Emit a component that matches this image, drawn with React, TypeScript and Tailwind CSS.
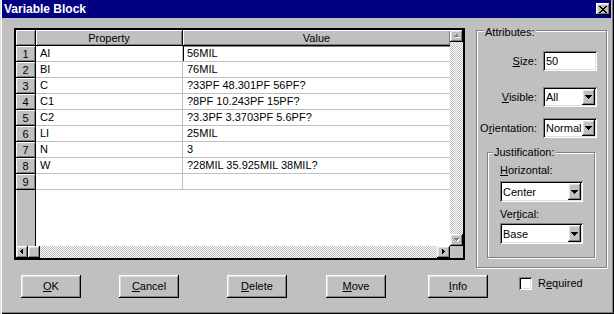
import React from "react";

// Win95-style bevels
const raised =
  "shadow-[inset_-1px_-1px_#000,inset_1px_1px_#fff,inset_-2px_-2px_#808080,inset_2px_2px_#dfdfdf]";
const sunken =
  "shadow-[inset_1px_1px_#808080,inset_-1px_-1px_#fff,inset_2px_2px_#000,inset_-2px_-2px_#dfdfdf]";
const checker =
  "bg-[image:repeating-conic-gradient(#fff_0_25%,#c0c0c0_0_50%)] bg-[length:2px_2px]";

const rows: [string, string][] = [
  ["AI", "56MIL"],
  ["BI", "76MIL"],
  ["C", "?33PF 48.301PF 56PF?"],
  ["C1", "?8PF 10.243PF 15PF?"],
  ["C2", "?3.3PF 3.3703PF 5.6PF?"],
  ["LI", "25MIL"],
  ["N", "3"],
  ["W", "?28MIL 35.925MIL 38MIL?"],
  ["", ""],
];

function DropArrow() {
  return (
    <svg width="7" height="4" viewBox="0 0 7 4" shapeRendering="crispEdges">
      <path d="M0 0h7v1H6v1H5v1H4v1H3V3H2V2H1V1H0z" fill="#000" />
    </svg>
  );
}

function ScrollArrow({ dir, disabled }: { dir: "up" | "down" | "left" | "right"; disabled?: boolean }) {
  const paths = {
    up: "M2 0h1v1h1v1h1v1H0V2h1V1h1z",
    down: "M0 0h5v1H4v1H3v1H2V2H1V1H0z",
    left: "M2 0h1v5H2V4H1V3H0V2h1V1h1z",
    right: "M0 0h1v1h1v1h1v1H2v1H1v1H0z",
  };
  const vertical = dir === "up" || dir === "down";
  const w = vertical ? 5 : 3;
  const h = vertical ? 3 : 5;
  return (
    <svg width={w + 1} height={h + 1} viewBox={`0 0 ${w + 1} ${h + 1}`} shapeRendering="crispEdges">
      {disabled && <path d={paths[dir]} fill="#fff" transform="translate(1 1)" />}
      <path d={paths[dir]} fill={disabled ? "#808080" : "#000"} />
    </svg>
  );
}

function CloseGlyph() {
  return (
    <svg width="8" height="7" viewBox="0 0 8 7" shapeRendering="crispEdges">
      <path
        d="M0 0h2v1h1v1h2V1h1V0h2v1H7v1H6v1H5v1h1v1h1v1h1v1H6V6H5V5H3v1H2v1H0V6h1V5h1V4h1V3H2V2H1V1H0z"
        fill="#000"
      />
    </svg>
  );
}

function Combo({ value, width, height }: { value: string; width: string; height: string }) {
  return (
    <div className={`${width} ${height} bg-white ${sunken} flex p-[2px]`}>
      <div className="flex-1 pl-[1px] leading-[16px] flex items-center">{value}</div>
      <div className={`w-[13px] bg-[#c0c0c0] ${raised} flex items-center justify-center`}>
        <DropArrow />
      </div>
    </div>
  );
}

function Button({ children, className = "" }: { children: React.ReactNode; className?: string }) {
  return (
    <div
      className={`w-[60px] h-[23px] bg-[#c0c0c0] ${raised} flex items-center justify-center ${className}`}
    >
      {children}
    </div>
  );
}

function U({ children }: { children: React.ReactNode }) {
  return <span className="underline underline-offset-[1px]">{children}</span>;
}

function DataGrid() {
  return (
    <div className="w-[451px] h-[232px] border-2 border-black flex">
      <div className="flex-1 flex flex-col">
        <div className="flex-1 flex flex-col">
          {/* header */}
          <div className="flex h-[16px]">
            <div className="w-[20px] bg-[#c0c0c0] border-r border-b border-black shadow-[inset_1px_1px_#fff,inset_-1px_-1px_#808080]" />
            <div className="w-[147px] bg-[#c0c0c0] border-r border-b border-black shadow-[inset_1px_1px_#fff,inset_-1px_-1px_#808080] flex items-center justify-center leading-[14px]">
              Property
            </div>
            <div className="flex-1 bg-[#c0c0c0] border-b border-black shadow-[inset_1px_1px_#fff,inset_-1px_-1px_#808080] flex items-center justify-center leading-[14px]">
              Value
            </div>
          </div>
          {rows.map(([prop, val], i) => (
            <div key={i} className="flex h-[16px]">
              <div className="w-[20px] bg-[#c0c0c0] border-r border-b border-black shadow-[inset_1px_1px_#fff,inset_-1px_-1px_#808080] flex items-center justify-center leading-[14px]">
                {i + 1}
              </div>
              <div className="w-[147px] bg-white border-r border-b border-[#c0c0c0] pl-[4px] leading-[15px] whitespace-nowrap">
                {prop}
              </div>
              <div
                className={`flex-1 bg-white border-b border-[#c0c0c0] pl-[4px] leading-[15px] whitespace-nowrap ${
                  i === 0 ? "shadow-[inset_1px_0_#000,inset_0_1px_#808080]" : ""
                }`}
              >
                {val}
              </div>
            </div>
          ))}
          <div className="flex-1 flex">
            <div className="w-[20px] bg-[#c0c0c0] border-r border-black shadow-[inset_1px_0_#fff]" />
            <div className="flex-1 bg-white" />
          </div>
        </div>
        {/* horizontal scrollbar */}
        <div className="h-[12px] flex">
          <div className={`w-[12px] bg-[#c0c0c0] ${raised} flex items-center justify-center`}>
            <ScrollArrow dir="left" />
          </div>
          <div className={`w-[12px] bg-[#c0c0c0] ${raised}`} />
          <div className={`flex-1 ${checker}`} />
          <div className={`w-[13px] bg-[#c0c0c0] ${raised} flex items-center justify-center`}>
            <ScrollArrow dir="right" />
          </div>
        </div>
      </div>
      {/* vertical scrollbar */}
      <div className="w-[13px] flex flex-col">
        <div className={`h-[12px] bg-[#c0c0c0] ${raised} flex items-center justify-center`}>
          <ScrollArrow dir="up" disabled />
        </div>
        <div className={`flex-1 ${checker}`} />
        <div className={`h-[12px] bg-[#c0c0c0] ${raised} flex items-center justify-center`}>
          <ScrollArrow dir="down" disabled />
        </div>
        <div className="h-[12px] bg-[#c0c0c0]" />
      </div>
    </div>
  );
}

function AttributesPanel() {
  return (
    <div className="relative ml-[11px] mt-[2px] w-[131px] h-[238px] border border-[#808080] shadow-[inset_1px_1px_#fff,1px_1px_#fff] flex flex-col">
      <span className="absolute -top-[5px] left-[7px] px-[1px] bg-[#c0c0c0] leading-[13px]">Attributes:</span>

      <div className="mt-[20px] flex items-center justify-end pr-[9px]">
        <span>
          <U>S</U>ize:
        </span>
        <div className={`ml-[6px] w-[54px] h-[20px] bg-white ${sunken} pl-[3px] leading-[20px]`}>50</div>
      </div>

      <div className="mt-[16px] flex items-center justify-end pr-[9px]">
        <span>
          <U>V</U>isible:
        </span>
        <div className="ml-[6px]">
          <Combo value="All" width="w-[54px]" height="h-[20px]" />
        </div>
      </div>

      <div className="mt-[11px] flex items-center justify-end pr-[9px]">
        <span>
          O<U>r</U>ientation:
        </span>
        <div className="ml-[6px]">
          <Combo value="Normal" width="w-[54px]" height="h-[20px]" />
        </div>
      </div>

      <div className="relative ml-[10px] mt-[14px] w-[108px] h-[106px] border border-[#808080] shadow-[inset_1px_1px_#fff,1px_1px_#fff] flex flex-col pl-[12px]">
        <span className="absolute -top-[7px] left-[5px] px-[1px] bg-[#c0c0c0] leading-[13px]">Justification:</span>
        <div className="mt-[11px] leading-[13px]">
          <U>H</U>orizontal:
        </div>
        <div className="mt-[4px]">
          <Combo value="Center" width="w-[83px]" height="h-[21px]" />
        </div>
        <div className="mt-[6px] leading-[13px]">
          Ver<U>t</U>ical:
        </div>
        <div className="mt-[2px]">
          <Combo value="Base" width="w-[83px]" height="h-[21px]" />
        </div>
      </div>
    </div>
  );
}

export default function App() {
  return (
    <div className="w-[614px] h-[314px] bg-[#c0c0c0] flex flex-col font-['Liberation_Sans',Arial,sans-serif] text-[11px] text-black shadow-[inset_1px_0_#dfdfdf,inset_2px_0_#fff,inset_-1px_-1px_#000,inset_-2px_-2px_#808080]">
      {/* title bar */}
      <div className="ml-[2px] mr-[3px] h-[18px] bg-[#000080] flex items-center justify-between">
        <span className="pl-[2px] text-white font-bold text-[12px] leading-[18px]">Variable Block</span>
        <div className={`mr-[1px] w-[14px] h-[12px] bg-[#c0c0c0] ${raised} flex items-center justify-center`}>
          <CloseGlyph />
        </div>
      </div>

      {/* body */}
      <div className="flex items-start pl-[14px] pt-[10px]">
        <DataGrid />
        <AttributesPanel />
      </div>

      {/* buttons */}
      <div className="mt-[7px] flex items-start pl-[21px]">
        <Button>
          <U>O</U>K
        </Button>
        <Button className="ml-[38px]">
          <U>C</U>ancel
        </Button>
        <Button className="ml-[48px]">
          <U>D</U>elete
        </Button>
        <Button className="ml-[39px]">
          <U>M</U>ove
        </Button>
        <Button className="ml-[42px]">
          <U>I</U>nfo
        </Button>
        <div className="ml-[31px] mt-[2px] flex items-center">
          <div className={`w-[13px] h-[13px] bg-white ${sunken}`} />
          <span className="ml-[6px] leading-[13px]">
            R<U>e</U>quired
          </span>
        </div>
      </div>
    </div>
  );
}
